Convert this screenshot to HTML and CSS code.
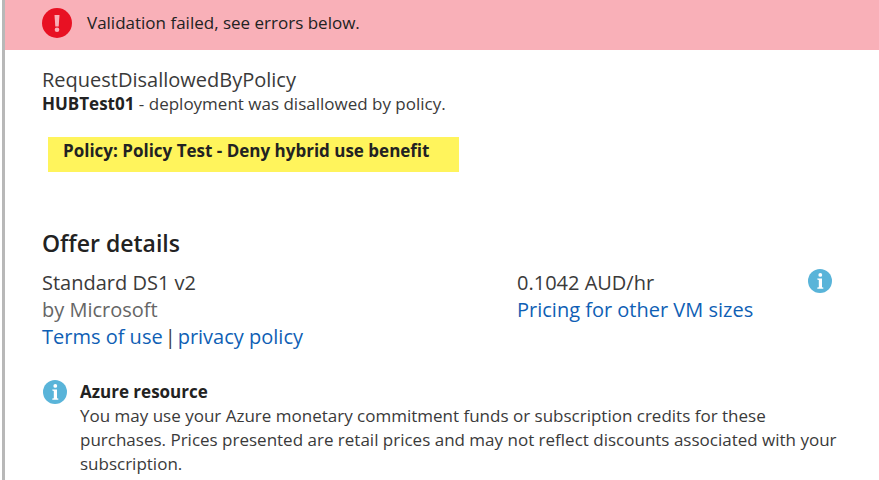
FILE: index.html
```html
<!DOCTYPE html>
<html lang="en">
<head>
<meta charset="utf-8">
<title>Validation</title>
<link rel="stylesheet" href="styles.css">
</head>
<body>
<main class="blade">
  <div class="banner" role="alert">
    <svg class="banner-icon" viewBox="0 0 30 30" aria-hidden="true">
      <circle cx="15" cy="15" r="15" fill="#e81123"/>
      <path d="M12.500 7h5l-.8 11.500h-3.400z" fill="#f9b0b8"/>
      <circle cx="15" cy="21.800" r="2.300" fill="#f9b0b8"/>
    </svg>
    <span>Validation failed, see errors below.</span>
  </div>
  <section class="error">
    <h1 class="error-code">RequestDisallowedByPolicy</h1>
    <p class="error-text"><strong>HUBTest01</strong> - deployment was disallowed by policy.</p>
    <p class="policy">Policy: Policy Test - Deny hybrid use benefit</p>
  </section>
  <section class="offer">
    <h2 class="offer-title">Offer details</h2>
    <div class="offer-row">
      <div class="offer-product">
        <div>Standard DS1 v2</div>
        <div class="publisher">by Microsoft</div>
        <div class="links"><a href="#">Terms of use</a><span>|</span><a href="#">privacy policy</a></div>
      </div>
      <div class="offer-price">
        <div>0.1042 AUD/hr</div>
        <a href="#">Pricing for other VM sizes</a>
      </div>
      <svg class="info-icon" viewBox="0 0 24 24" aria-hidden="true">
        <circle cx="12" cy="12" r="12" fill="#59b4d9"/>
        <circle cx="12.300" cy="5.900" r="1.900" fill="#fff"/>
        <path d="M9.300 9.500h4.700v8.700l1.300.4v1.100h-6v-1.100l1.500-.4v-7.200l-1.500-.4z" fill="#fff"/>
      </svg>
    </div>
  </section>
  <section class="note">
    <svg class="info-icon" viewBox="0 0 24 24" aria-hidden="true">
      <circle cx="12" cy="12" r="12" fill="#59b4d9"/>
      <circle cx="12.300" cy="5.900" r="1.900" fill="#fff"/>
      <path d="M9.300 9.500h4.700v8.700l1.300.4v1.100h-6v-1.100l1.500-.4v-7.200l-1.500-.4z" fill="#fff"/>
    </svg>
    <div class="note-body">
      <h3 class="note-title">Azure resource</h3>
      <p class="note-text">You may use your Azure monetary commitment funds or subscription credits for these purchases. Prices presented are retail prices and may not reflect discounts associated with your subscription.</p>
    </div>
  </section>
</main>
</body>
</html>
```
FILE: styles.css
```css
* { box-sizing: border-box; }
body, h1, h2, h3, p { margin: 0; font-weight: 400; }
body {
  font-family: "Segoe UI", "Open Sans", "Noto Sans", sans-serif;
  font-size: 17px;
  line-height: 24px;
  color: #3a3a3a;
  background: #fff;
}
a { color: #0f5fb5; text-decoration: none; }
.blade {
  min-height: 100vh;
  margin-left: 2px;
  border-left: 3px solid #b8b8b8;
}
.banner {
  display: flex;
  align-items: center;
  gap: 15px;
  min-height: 50px;
  padding: 0 37px 4px;
  background: #f9b0b8;
  color: #222;
}
.banner-icon { width: 30px; height: 30px; flex: none; }
.error { padding: 18px 37px 0; }
.error-code { font-size: 20px; line-height: 24px; }
.error-text strong { font-weight: 700; color: #222; }
.policy {
  width: fit-content;
  margin: 21px 0 0 6px;
  padding: 2px 29px 9px 15px;
  background: #fff45c;
  font-weight: 700;
  color: #222;
}
.offer { padding: 55px 47px 0 37px; }
.offer-title { font-size: 23px; line-height: 32px; font-weight: 600; color: #222; }
.offer-row {
  display: grid;
  grid-template-columns: 475px 1fr 24px;
  margin-top: 10px;
  font-size: 20px;
  line-height: 27px;
}
.publisher { color: #666; }
.links { display: flex; gap: 2px; }
.info-icon { width: 24px; height: 24px; flex: none; }
.note { display: flex; gap: 13px; padding: 30px 37px 0 38px; }
.note-title { font-size: 17px; font-weight: 700; color: #222; }
```
